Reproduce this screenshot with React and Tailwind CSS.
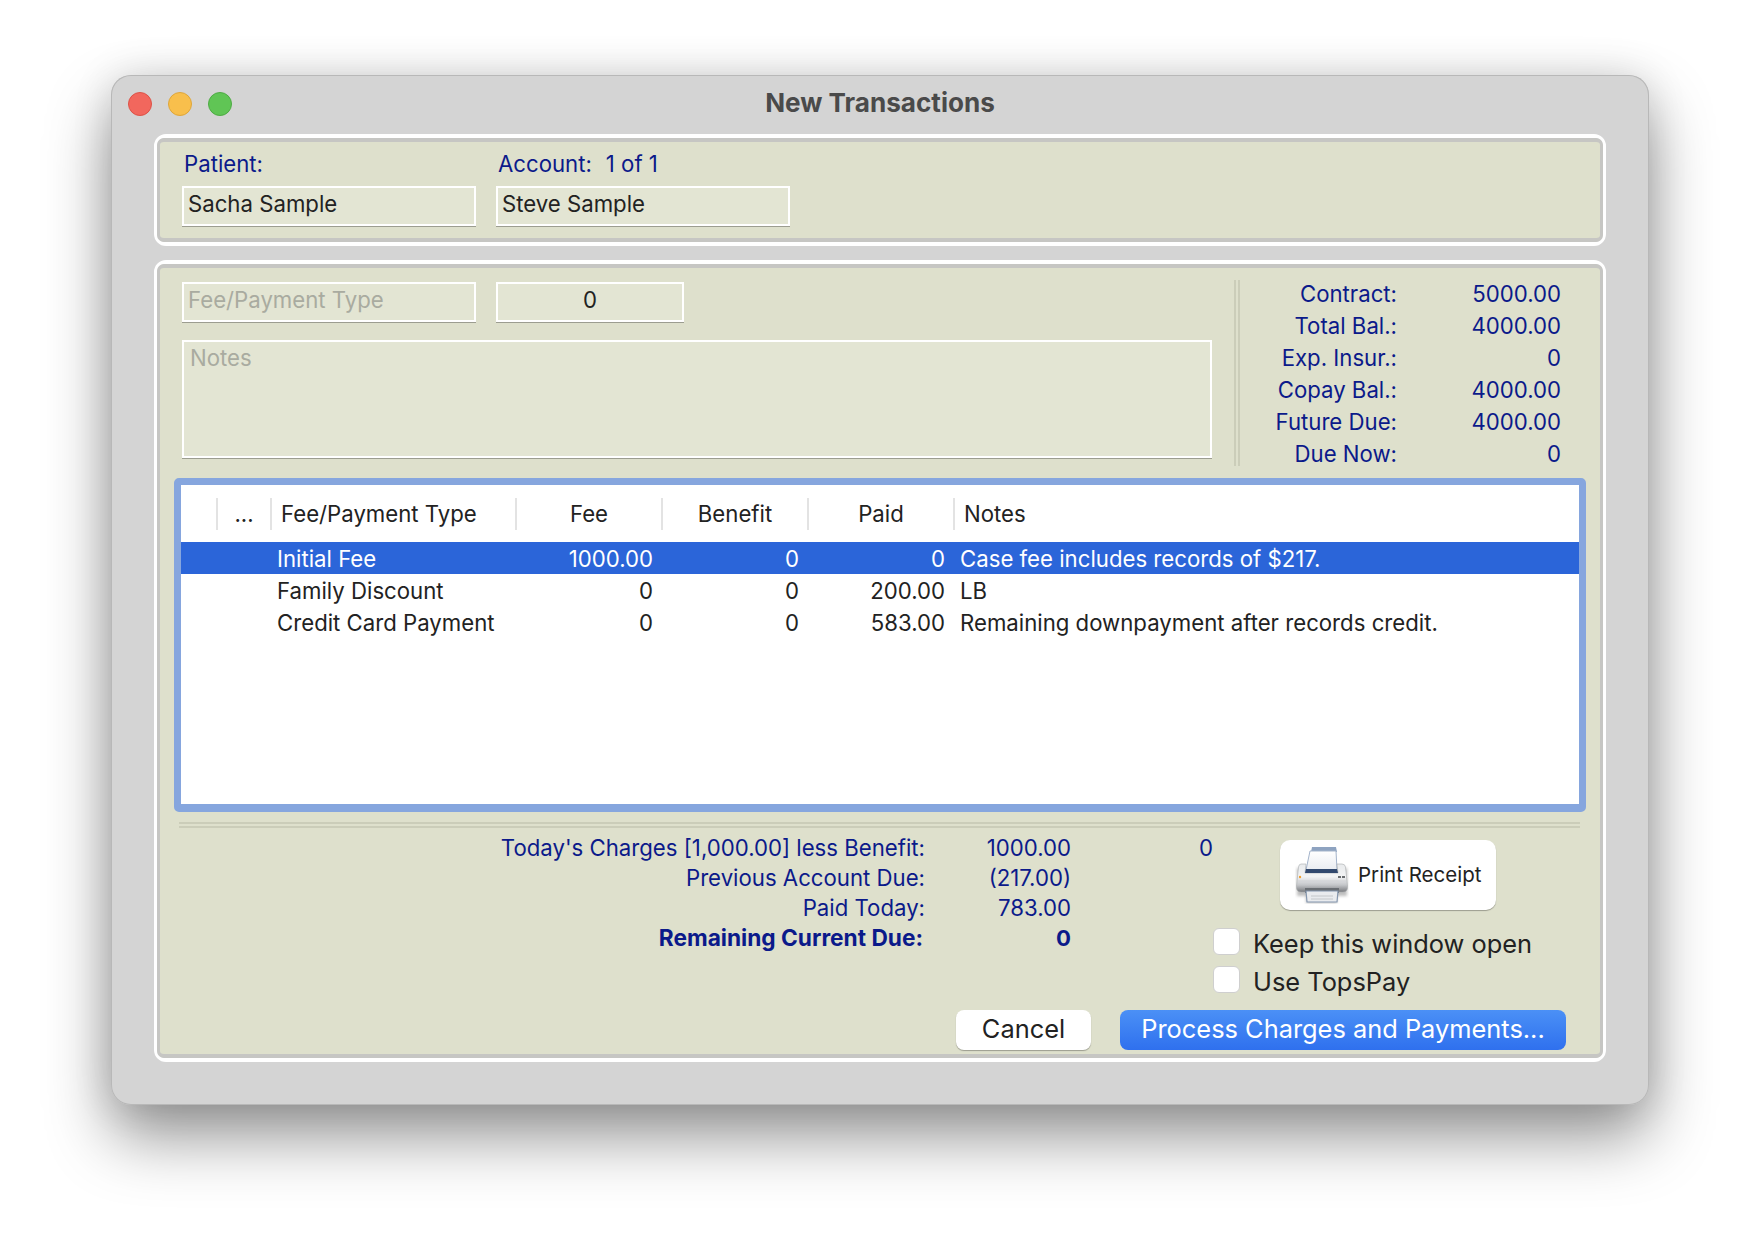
import React from "react";

const Panel = ({ className, children }) => (
  <div className={`ml-[43px] w-[1452px] rounded-[12px] border-x-[3px] border-y-4 border-white ${className}`}>
    <div className="h-full rounded-[7px] border-x-[3px] border-y-4 border-[#c6c6c3] bg-[#dee0cc]">{children}</div>
  </div>
);

const Field = ({ className, children }) => (
  <div className={`flex h-10 items-center border-2 border-white bg-[#e3e5d3] shadow-[0_1px_0_#9c9d90] ${className}`}>{children}</div>
);

const stats = [
  ["Contract:", "5000.00"],
  ["Total Bal.:", "4000.00"],
  ["Exp. Insur.:", "0"],
  ["Copay Bal.:", "4000.00"],
  ["Future Due:", "4000.00"],
  ["Due Now:", "0"],
];

const rows = [
  ["Initial Fee", "1000.00", "0", "0", "Case fee includes records of $217."],
  ["Family Discount", "0", "0", "200.00", "LB"],
  ["Credit Card Payment", "0", "0", "583.00", "Remaining downpayment after records credit."],
];

const totals = [
  ["Today's Charges [1,000.00] less Benefit:", "1000.00", "0"],
  ["Previous Account Due:", "(217.00)", ""],
  ["Paid Today:", "783.00", ""],
  ["Remaining Current Due:", "0", ""],
];

const cols = "grid grid-cols-[35px_54px_245px_146px_146px_146px_1fr]";

const Printer = () => (
  <svg width="54" height="58" viewBox="0 0 54 58" className="shrink-0">
    <defs>
      <linearGradient id="body" x1="0" y1="0" x2="0" y2="1">
        <stop offset="0" stopColor="#e8eaec" />
        <stop offset="0.45" stopColor="#f3f4f5" />
        <stop offset="0.75" stopColor="#c4c6c9" />
        <stop offset="1" stopColor="#77797d" />
      </linearGradient>
      <linearGradient id="paper" x1="0" y1="0" x2="0" y2="1">
        <stop offset="0" stopColor="#ffffff" />
        <stop offset="1" stopColor="#e9ecf1" />
      </linearGradient>
      <filter id="soft" x="-10%" y="-10%" width="120%" height="120%">
        <feGaussianBlur stdDeviation="0.55" />
      </filter>
      <filter id="halo" x="-20%" y="-20%" width="140%" height="140%">
        <feGaussianBlur stdDeviation="1.8" />
      </filter>
    </defs>
    <path d="M2 22H52V50H42V57H11V50H2z" fill="#00000040" filter="url(#halo)" />
    <g filter="url(#soft)">
      <path d="M17 1H41L42 6H16z" fill="#8ea3c0" />
      <path d="M15 5H41L42 24H11z" fill="url(#paper)" stroke="#a3b3ca" strokeWidth="1" />
      <path d="M6 18H11L10 27H43L42 18H47Q50 18 50.5 21L52.5 40Q53 46 48 46H6Q1 46 1.5 40L3.5 21Q4 18 6 18z" fill="url(#body)" stroke="#a9acaf" strokeWidth="0.6" />
      <path d="M11 23H42L43 27H10z" fill="#31496e" />
      <path d="M3 35H51" stroke="#d0d2d5" strokeWidth="1" />
      <circle cx="5" cy="31" r="1.2" fill="#f0a030" />
      <rect x="43" y="30" width="3" height="2" fill="#6a6d70" />
      <rect x="47" y="30" width="3" height="2" fill="#6a6d70" />
      <path d="M10 42H44V47H10z" fill="#6b6e73" />
      <path d="M11 45H43L42 56H12z" fill="#e9ebee" stroke="#8496ae" strokeWidth="1.2" />
      <path d="M16 50H38M16 53H38" stroke="#c4c7ca" strokeWidth="1" />
    </g>
  </svg>
);

export default function App() {
  return (
    <div className="h-[1252px] w-[1760px] overflow-hidden bg-white pl-[111px] pt-[75px] font-['Inter',sans-serif] text-[22.2px] text-[#222222]">
      <div className="h-[1030px] w-[1538px] rounded-[20px] bg-[#d4d4d4] shadow-[inset_0_0_0_1px_#b8b8b8,0_32px_64px_rgba(0,0,0,0.42),0_0_40px_rgba(0,0,0,0.12)]">
        <div className="relative flex h-[59px] items-center pb-[2px]">
          <div className="ml-[17px] flex gap-4">
            <span className="h-6 w-6 rounded-full border border-[#dd5247] bg-[#f2675d]" />
            <span className="h-6 w-6 rounded-full border border-[#dfa63a] bg-[#f8bf4c]" />
            <span className="h-6 w-6 rounded-full border border-[#4eab44] bg-[#60c555]" />
          </div>
          <div className="absolute inset-x-0 top-[11px] text-center text-[26.1px] leading-[34px] font-bold text-[#4a4a4a]">New Transactions</div>
        </div>

        <Panel className="h-[112px]">
          <div className="mt-[6px] flex h-8 items-center pl-[24px] text-[#0b1a8a]">
            <div className="w-[314px]">Patient:</div>
            <div>Account:</div>
            <div className="ml-[14px]">1 of 1</div>
          </div>
          <div className="mt-[6px] flex gap-[19px] pl-[22px]">
            <Field className="w-[294px] pb-1 pl-1">Sacha Sample</Field>
            <Field className="ml-px w-[294px] pb-1 pl-1">Steve Sample</Field>
          </div>
        </Panel>

        <Panel className="mt-[14px] h-[802px]">
          <div className="flex h-[210px] pt-[10px]">
            <div className="ml-[22px] w-[1030px] pt-[4px]">
              <div className="flex gap-[19px]">
                <Field className="w-[294px] pb-[5px] pl-1 text-[#a9aba0]">Fee/Payment Type</Field>
                <Field className="ml-px w-[188px] justify-center pb-[5px]">0</Field>
              </div>
              <div className="mt-[18px] h-[118px] border-2 border-white bg-[#e3e5d3] pl-[6px] leading-[31px] text-[#a9aba0] shadow-[0_1px_0_#9c9d90]">Notes</div>
            </div>
            <div className="ml-[22px] mt-[2px] h-[186px] w-[6px] border-x-2 border-[#cbcdb9]" />
            <div className="grid h-[192px] grid-cols-[157px_164px] auto-rows-[32px] items-center text-right text-[#0b1a8a]">
              {stats.map(([a, b]) => (
                <React.Fragment key={a}>
                  <div>{a}</div>
                  <div>{b}</div>
                </React.Fragment>
              ))}
            </div>
          </div>

          <div className="ml-[14px] h-[334px] w-[1412px] rounded-[5px] border-x-[7px] border-b-8 border-t-[7px] border-[#86a6de] bg-white">
            <div className={`${cols} h-[57px] pt-[13px]`}>
              <div />
              <div className="flex h-8 items-center justify-center border-l-2 border-[#e3e3e3]">...</div>
              <div className="flex h-8 items-center border-l-2 border-[#e3e3e3] pl-[9px]">Fee/Payment Type</div>
              <div className="flex h-8 items-center justify-center border-l-2 border-[#e3e3e3]">Fee</div>
              <div className="flex h-8 items-center justify-center border-l-2 border-[#e3e3e3]">Benefit</div>
              <div className="flex h-8 items-center justify-center border-l-2 border-[#e3e3e3]">Paid</div>
              <div className="flex h-8 items-center border-l-2 border-[#e3e3e3] pl-[9px]">Notes</div>
            </div>
            {rows.map((r, i) => (
              <div key={r[0]} className={`${cols} h-8 items-center pb-[1px] ${i === 0 ? "bg-[#2b65d9] text-white" : ""}`}>
                <div />
                <div />
                <div className="pl-[7px]">{r[0]}</div>
                <div className="pr-2 text-right">{r[1]}</div>
                <div className="pr-2 text-right">{r[2]}</div>
                <div className="pr-2 text-right">{r[3]}</div>
                <div className="pl-[7px]">{r[4]}</div>
              </div>
            ))}
          </div>

          <div className="ml-[19px] mt-[10px] h-[6px] w-[1401px] border-y-2 border-[#cbcdb9]" />

          <div className="mt-[5px] flex h-[177px]">
            <div className="grid h-[120px] w-[1053px] grid-cols-[765px_146px_142px] auto-rows-[30px] items-center text-right text-[#0b1a8a]">
              {totals.map(([a, b, c], i) => (
                <React.Fragment key={a}>
                  <div className={i === 3 ? "pr-[2px] text-[22.7px] font-bold" : ""}>{a}</div>
                  <div className={i === 3 ? "font-bold" : ""}>{b}</div>
                  <div>{c}</div>
                </React.Fragment>
              ))}
            </div>
            <div>
              <div className="ml-[67px] mt-[7px] flex h-[70px] w-[216px] items-center gap-[9px] rounded-[10px] bg-white pl-[15px] text-[20.5px] shadow-[0_1px_1px_rgba(0,0,0,0.3)]">
                <Printer />
                Print Receipt
              </div>
              <div className="mt-[18px] flex h-[27px] items-center gap-[13px] text-[25.4px]">
                <span className="h-[27px] w-[27px] rounded-[6px] border border-[#cfcfcf] bg-white" />
                <span className="translate-y-[3px]">Keep this window open</span>
              </div>
              <div className="mt-[11px] flex h-[27px] items-center gap-[13px] text-[25.4px]">
                <span className="h-[27px] w-[27px] rounded-[6px] border border-[#cfcfcf] bg-white" />
                <span className="translate-y-[3px]">Use TopsPay</span>
              </div>
            </div>
          </div>

          <div className="ml-[796px] flex h-10 gap-[29px] text-[25.4px]">
            <div className="flex w-[135px] items-center justify-center rounded-[8px] bg-white pb-[1px] shadow-[0_1px_1px_rgba(0,0,0,0.3)]">Cancel</div>
            <div className="flex w-[446px] items-center justify-center rounded-[8px] bg-gradient-to-b from-[#4b90f6] to-[#2f70ee] pb-[1px] text-white">Process Charges and Payments...</div>
          </div>
        </Panel>
      </div>
    </div>
  );
}
